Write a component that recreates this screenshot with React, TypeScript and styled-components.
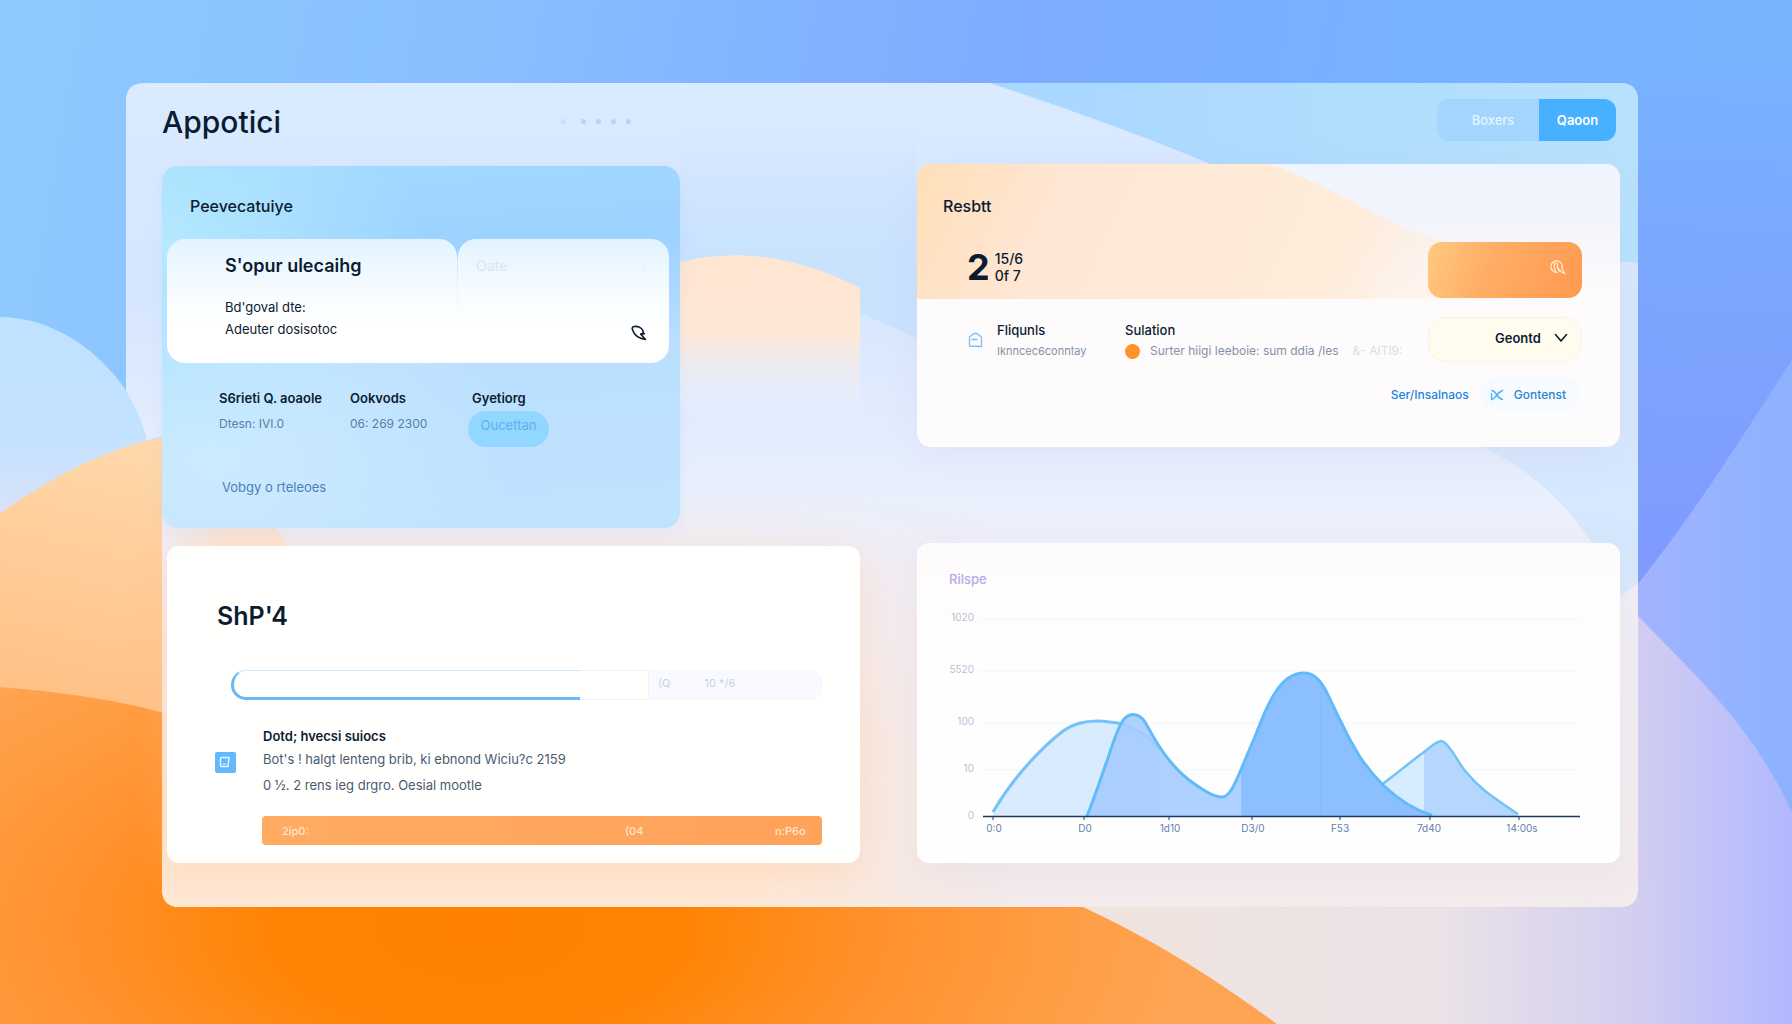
import React from "react";
import styled, { createGlobalStyle } from "styled-components";

const ink = "#0c1c30";

const GlobalStyle = createGlobalStyle`
  *, *::before, *::after { box-sizing: border-box; }
  body { margin: 0; background: #8cbcff; color: ${ink}; font-family: Inter, "Liberation Sans", sans-serif; }
  h1, h2, h3, p, dl, dt, dd { margin: 0; }
  button, select { font: inherit; color: inherit; border: 0; background: none; padding: 0; cursor: pointer; }
  a { text-decoration: none; }
`;

const Page = styled.div`
  position: relative;
  min-height: 100vh;
  padding: 83px 154px 117px 126px;
  overflow: hidden;
`;

const Art = styled.svg`
  position: absolute;
  inset: 0;
  width: 100%;
  height: 100%;
  display: block;
`;

const Panel = styled.div`
  position: relative;
  padding: 0 18px 44px 36px;
`;

const Header = styled.header`
  position: relative;
  display: flex;
  align-items: center;
  justify-content: space-between;
  height: 81px;
  padding: 0 4px 8px 0;
`;

const Brand = styled.div`
  display: flex;
  align-items: center;
  gap: 280px;
  padding-top: 4px;
`;

const Logo = styled.h1`
  font-size: 30px;
  line-height: 36px;
  font-weight: 500;
`;

const Dots = styled.div`
  display: flex;
  gap: 10px;
`;

const Dot = styled.i<{ $faint?: boolean }>`
  width: 5px;
  height: 5px;
  border-radius: 50%;
  background: #bfd0ea;
  opacity: ${(p) => (p.$faint ? 0.5 : 1)};
  margin-right: ${(p) => (p.$faint ? "5px" : 0)};
`;

const Segmented = styled.div`
  display: flex;
  height: 42px;
  border-radius: 12px;
  overflow: hidden;
  background: #a3d5ff;
`;

const Segment = styled.button<{ $active?: boolean }>`
  width: ${(p) => (p.$active ? "77px" : "102px")};
  padding-left: ${(p) => (p.$active ? 0 : "10px")};
  font-size: 13px;
  font-weight: ${(p) => (p.$active ? 600 : 500)};
  color: ${(p) => (p.$active ? "#ffffff" : "#e6f4ff")};
  background: ${(p) => (p.$active ? "#47b1ff" : "transparent")};
`;

const Board = styled.main`
  position: relative;
  display: grid;
  grid-template-columns: 698fr 703fr;
  gap: 57px;
`;

const Column = styled.div<{ $gap: number; $top?: number }>`
  display: flex;
  flex-direction: column;
  min-width: 0;
  gap: ${(p) => p.$gap}px;
  padding-top: ${(p) => p.$top ?? 0}px;
`;

const SkyCard = styled.section`
  width: calc(100% - 180px);
  min-height: 362px;
  padding: 0 11px 0 5px;
  border-radius: 16px;
  background:
    radial-gradient(ellipse 260px 220px at 0% 22%, #b4e9ff 0%, rgba(180, 233, 255, 0) 100%),
    radial-gradient(ellipse 300px 200px at 10% 80%, #ccebff 0%, rgba(204, 235, 255, 0) 100%),
    linear-gradient(176deg, #a3d8ff 0%, #9dd2ff 26%, #bbdfff 54%, #c0e3ff 100%);
  box-shadow: 0 4px 16px rgba(150, 190, 240, 0.14);
`;

const SkyTitle = styled.h2`
  padding: 29px 0 0 23px;
  height: 73px;
  font-size: 16px;
  line-height: 22px;
  font-weight: 500;
`;

const Tabs = styled.div`
  display: grid;
  grid-template-columns: 290fr 1px 211fr;
  height: 124px;
`;

const TabPane = styled.div<{ $side: "left" | "right" }>`
  display: flex;
  flex-direction: column;
  min-width: 0;
  padding: ${(p) => (p.$side === "left" ? "16px 16px 0 58px" : "16px 22px 22px 18px")};
  border-radius: ${(p) => (p.$side === "left" ? "18px 18px 0 18px" : "18px 18px 18px 0")};
  background: linear-gradient(#e2f4ff 0%, #fafdff 52%, #ffffff 70%);
`;

const Seam = styled.div`
  margin-top: 18px;
  background: linear-gradient(#cbe7fb, #ffffff 56%);
`;

const TabTitle = styled.h3`
  font-size: 18px;
  line-height: 22px;
  font-weight: 600;
  margin-bottom: 19px;
`;

const Line = styled.p`
  font-size: 13px;
  line-height: 22px;
`;

const Ghost = styled.div`
  display: flex;
  justify-content: space-between;
  flex: 1;
  font-size: 14px;
  line-height: 22px;
  color: #d6e7f3;
`;

const IconButton = styled.button`
  align-self: flex-end;
  display: block;
  height: 16px;
`;

const Facts = styled.dl`
  display: grid;
  grid-template-columns: 131px 122px 1fr;
  padding: 25px 0 0 52px;
  font-size: 12px;
  line-height: 20px;
`;

const Term = styled.dt`
  font-size: 13px;
  font-weight: 600;
  white-space: nowrap;
`;

const Detail = styled.dd`
  margin-top: 6px;
  color: #5580a8;
`;

const Badge = styled.span`
  display: block;
  width: 81px;
  height: 36px;
  margin: -3px 0 0 -4px;
  padding-top: 4px;
  border-radius: 18px;
  text-align: center;
  font-size: 13px;
  color: #5db2ef;
  background: #92d7ff;
`;

const SkyLink = styled.a`
  display: inline-block;
  margin: 30px 0 0 55px;
  font-size: 13px;
  line-height: 20px;
  color: #4c80b4;
`;

const UsageCard = styled.section`
  min-height: 317px;
  margin-left: 5px;
  padding: 54px 38px 18px 50px;
  border-radius: 12px;
  background: #fffffe;
  box-shadow: 0 12px 36px rgba(255, 190, 140, 0.3);
`;

const Figure = styled.h2`
  font-size: 25px;
  line-height: 32px;
  font-weight: 600;
`;

const Track = styled.div`
  display: flex;
  justify-content: space-between;
  height: 30px;
  margin: 38px 0 0 14px;
  border-radius: 14px;
  box-shadow: inset 0 0 0 1px #f0f2fa;
`;

const Fill = styled.div`
  border: 0 solid #68b8f7;
  border-width: 1px 0 3px 3px;
  border-top-color: #d3eafc;
  border-radius: 15px 0 0 15px;
`;

const TrackEnd = styled.div`
  display: flex;
  align-items: center;
  gap: 34px;
  width: 174px;
  padding: 0 0 4px 9px;
  border-left: 1px solid #eef2f9;
  border-radius: 0 14px 14px 0;
  font-size: 11px;
  color: #c3d4ea;
  background: rgba(246, 248, 255, 0.7);
`;

const Notice = styled.div`
  display: grid;
  grid-template-columns: 20px 1fr;
  column-gap: 28px;
  align-items: center;
  margin: 26px 0 0 -2px;
`;

const NoticeText = styled.div`
  display: flex;
  flex-direction: column;
  font-size: 13px;
  line-height: 26px;
  color: #4a5a70;
  white-space: nowrap;
`;

const NoticeTitle = styled.h3`
  font-size: 13px;
  line-height: 20px;
  font-weight: 600;
  color: ${ink};
`;

const Bar = styled.div`
  display: grid;
  grid-template-columns: 343px 150px 1fr;
  align-items: center;
  height: 29px;
  margin: 18px 0 0 45px;
  padding-left: 20px;
  border-radius: 4px;
  font-size: 11px;
  font-weight: 500;
  color: #ffe6cf;
  background: linear-gradient(90deg, #ffab62, #ffa25a);
`;

const ResultCard = styled.section`
  position: relative;
  min-height: 283px;
  border-radius: 14px;
  overflow: hidden;
  background: #fefbfc;
  box-shadow: 0 10px 34px rgba(190, 180, 220, 0.16);
`;

const Hero = styled.div`
  position: relative;
  height: 135px;
  padding: 31px 38px 0 26px;
`;

const HeroTitle = styled.h2`
  position: relative;
  font-size: 16px;
  line-height: 22px;
  font-weight: 500;
`;

const HeroRow = styled.div`
  position: relative;
  display: flex;
  align-items: center;
  justify-content: space-between;
  margin-top: 25px;
  padding-left: 24px;
`;

const Score = styled.div`
  display: flex;
  align-items: center;
  gap: 5px;
  padding-bottom: 6px;
`;

const ScoreMain = styled.strong`
  font-size: 36px;
  line-height: 36px;
  font-weight: 700;
`;

const ScoreSide = styled.span`
  display: flex;
  flex-direction: column;
  font-size: 14px;
  line-height: 17px;
  font-weight: 500;
`;

const SearchButton = styled.button`
  display: flex;
  align-items: center;
  justify-content: flex-end;
  width: 154px;
  height: 56px;
  padding: 0 16px 6px 0;
  border-radius: 14px;
  background: linear-gradient(110deg, #ffc980 0%, #ffad66 40%, #ff9a50 100%);
`;

const ResultRow = styled.div`
  display: grid;
  grid-template-columns: 29px 128px 1fr 154px;
  align-items: start;
  padding: 18px 38px 0 51px;
`;

const RowIcon = styled.div`
  padding-top: 15px;
  height: 34px;
`;

const Field = styled.div`
  padding-top: 3px;
  min-width: 0;
  white-space: nowrap;
`;

const FieldTitle = styled.h3`
  font-size: 13px;
  line-height: 20px;
  font-weight: 500;
`;

const FieldText = styled.p<{ $small?: boolean }>`
  display: flex;
  align-items: center;
  font-size: ${(p) => (p.$small ? 11 : 12)}px;
  line-height: 22px;
  color: #8791a6;
`;

const Bullet = styled.i`
  width: 15px;
  height: 15px;
  margin-right: 10px;
  border-radius: 50%;
  background: #ff9327;
`;

const Faint = styled.span`
  margin-left: 14px;
  color: #dcdee6;
`;

const SelectWrap = styled.div`
  position: relative;
`;

const Select = styled.select`
  appearance: none;
  width: 100%;
  height: 45px;
  padding: 0 30px 4px 66px;
  border: 1px solid #f8f3e4;
  border-radius: 18px;
  font-size: 13px;
  font-weight: 600;
  background: #fffcef;
`;

const Chevron = styled.svg`
  position: absolute;
  right: 14px;
  top: 16px;
  pointer-events: none;
`;

const Actions = styled.div`
  display: flex;
  align-items: center;
  justify-content: flex-end;
  gap: 12px;
  padding: 16px 40px 0 0;
  font-size: 12px;
  font-weight: 500;
`;

const ActionLink = styled.a`
  color: #2486dc;
`;

const ActionButton = styled.button`
  display: flex;
  align-items: center;
  gap: 10px;
  height: 33px;
  padding: 0 14px 0 9px;
  border-radius: 14px;
  color: #2f83cb;
  background: #f7fbff;
`;

const ChartCard = styled.section`
  min-height: 320px;
  padding: 26px 32px 20px;
  border-radius: 12px;
  background: linear-gradient(#fefbfd, #fefefe 30%);
  box-shadow: 0 10px 34px rgba(225, 205, 215, 0.25);
`;

const ChartTitle = styled.h2`
  margin-bottom: 11px;
  font-size: 13px;
  line-height: 20px;
  font-weight: 500;
  color: #b7a9ea;
`;

const Chart = styled.svg`
  display: block;
  width: 100%;
  height: auto;
  font-size: 10px;
`;

const waveA = "M44 212C66 174 96 145 114 131C128 121 146 120 161 122C184 124 198 136 211 148";
const waveB =
  "M138 216C146 196 152 178 159 158C165 140 168 130 173 122C179 112 189 112 196 122C204 136 210 148 220 160C232 175 242 182 253 189C262 195 267 197 273 197C280 197 285 186 291 172C297 158 300 150 305 139C313 120 316 108 326 93C334 80 344 73 355 73C365 73 371 80 376 89C382 101 386 110 392 122C398 135 404 146 411 157C419 169 427 178 435 186C449 199 466 210 482 215";
const waveC = "M432 185C446 175 460 163 475 152C482 147 486 142 492 141C497 142 498 145 502 150C508 158 511 165 517 172C523 179 529 185 536 191C548 200 558 207 569 214";

const yLabels = [
  { text: "1020", y: 18 },
  { text: "5520", y: 70 },
  { text: "100", y: 122 },
  { text: "10", y: 169 },
  { text: "0", y: 216 },
];
const xLabels = [
  { text: "0:0", x: 45 },
  { text: "D0", x: 136 },
  { text: "1d10", x: 221 },
  { text: "D3/0", x: 304 },
  { text: "F53", x: 391 },
  { text: "7d40", x: 480 },
  { text: "14:00s", x: 573 },
];

function Backdrop() {
  return (
    <Art viewBox="0 0 1792 1024" preserveAspectRatio="none" aria-hidden="true">
      <defs>
        <linearGradient id="sky" x1="0" y1="0" x2="1" y2="0.1">
          <stop offset="0" stopColor="#8fcaff" />
          <stop offset="0.3" stopColor="#88bdff" />
          <stop offset="0.57" stopColor="#7eabff" />
          <stop offset="0.8" stopColor="#77b3ff" />
          <stop offset="1" stopColor="#79b4ff" />
        </linearGradient>
        <linearGradient id="indigo" x1="0" y1="0" x2="0" y2="1">
          <stop offset="0" stopColor="#7c9eff" stopOpacity="0" />
          <stop offset="0.35" stopColor="#7da2ff" stopOpacity="0.8" />
          <stop offset="0.75" stopColor="#7f9aff" />
        </linearGradient>
        <linearGradient id="bubble" x1="0" y1="0" x2="0" y2="1">
          <stop offset="0" stopColor="#bfe2ff" />
          <stop offset="0.4" stopColor="#c4e2ff" />
          <stop offset="0.65" stopColor="#d9e2fa" />
        </linearGradient>
        <linearGradient id="hillLight" x1="0.4" y1="0" x2="0.2" y2="1">
          <stop offset="0" stopColor="#ffd9ad" />
          <stop offset="1" stopColor="#ffb06a" />
        </linearGradient>
        <radialGradient id="hillDark" gradientUnits="userSpaceOnUse" cx="0" cy="0" r="1" gradientTransform="translate(480 930) scale(700 340)">
          <stop offset="0" stopColor="#ff8000" />
          <stop offset="0.3" stopColor="#ff8406" />
          <stop offset="0.6" stopColor="#ff9330" />
          <stop offset="1" stopColor="#ffa452" />
        </radialGradient>
        <linearGradient id="mist" gradientUnits="userSpaceOnUse" x1="1080" y1="0" x2="1792" y2="0">
          <stop offset="0" stopColor="#f0e4dd" />
          <stop offset="0.5" stopColor="#ebe3e7" />
          <stop offset="0.78" stopColor="#d3cef0" />
          <stop offset="1" stopColor="#b0b8ff" />
        </linearGradient>
        <linearGradient id="wing" x1="0" y1="0" x2="1" y2="0">
          <stop offset="0" stopColor="#a3b3ff" />
          <stop offset="0.8" stopColor="#8fb3ff" />
          <stop offset="1" stopColor="#8db0ff" />
        </linearGradient>
      </defs>
      <rect width="1792" height="1024" fill="url(#sky)" />
      <rect x="1500" y="60" width="292" height="680" fill="url(#indigo)" />
      <path d="M0 317C76 318 134 382 156 450V620H0Z" fill="url(#bubble)" />
      <path d="M1792 360C1740 440 1700 505 1638 584V1024H1792Z" fill="url(#wing)" />
      <path d="M1638 616C1710 690 1752 728 1792 812V1024H1000V616Z" fill="url(#mist)" />
      <path d="M0 513C60 472 110 448 162 437H400V900H0Z" fill="url(#hillLight)" />
      <path d="M0 687C60 692 120 700 163 713L1083 907C1150 938 1210 975 1277 1024H0Z" fill="url(#hillDark)" />
    </Art>
  );
}

function PanelArt() {
  return (
    <Art viewBox="0 0 1512 824" preserveAspectRatio="none" aria-hidden="true">
      <defs>
        <linearGradient id="glass" x1="0" y1="0" x2="0" y2="1">
          <stop offset="0" stopColor="#daeaff" />
          <stop offset="0.25" stopColor="#d6e6ff" />
          <stop offset="0.5" stopColor="#e9f0fd" />
          <stop offset="0.58" stopColor="#f0effa" />
          <stop offset="1" stopColor="#f3ebec" />
        </linearGradient>
        <linearGradient id="warm" x1="0" y1="0" x2="0" y2="1">
          <stop offset="0" stopColor="#ffe4d2" stopOpacity="0" />
          <stop offset="0.6" stopColor="#ffe4cf" stopOpacity="0.9" />
          <stop offset="1" stopColor="#ffe8d6" />
        </linearGradient>
        <linearGradient id="warmFade" x1="0" y1="0" x2="1" y2="0">
          <stop offset="0.7" stopColor="#fff" />
          <stop offset="1" stopColor="#000" />
        </linearGradient>
        <mask id="warmMask">
          <rect y="400" width="880" height="424" fill="url(#warmFade)" />
        </mask>
        <linearGradient id="swoosh" x1="0" y1="0" x2="1" y2="0">
          <stop offset="0" stopColor="#a9d6ff" />
          <stop offset="1" stopColor="#b7e2fd" />
        </linearGradient>
        <linearGradient id="channel" x1="0" y1="0" x2="0" y2="1">
          <stop offset="0" stopColor="#cce3ff" stopOpacity="0" />
          <stop offset="0.6" stopColor="#c9e3ff" />
        </linearGradient>
        <linearGradient id="peach" x1="0" y1="0" x2="0" y2="1">
          <stop offset="0" stopColor="#ffe5d2" />
          <stop offset="0.45" stopColor="#ffe8d6" />
          <stop offset="1" stopColor="#eef4ff" stopOpacity="0" />
        </linearGradient>
        <linearGradient id="patch" x1="0" y1="0" x2="1" y2="0">
          <stop offset="0" stopColor="#ffe0c9" stopOpacity="0" />
          <stop offset="0.5" stopColor="#ffe0c9" />
        </linearGradient>
        <clipPath id="frame">
          <path d="M0 18Q0 0 18 0H1494Q1512 0 1512 18V806Q1512 824 1494 824H54Q36 824 36 806V354L21 357Q14 330 0 308Z" />
        </clipPath>
      </defs>
      <g clipPath="url(#frame)">
        <rect width="1512" height="824" fill="url(#glass)" />
        <path d="M554 40H791V255L734 230L554 190Z" fill="url(#channel)" />
        <path d="M864 0C960 32 1060 68 1142 106C1250 150 1400 170 1512 180V0Z" fill="url(#swoosh)" />
        <path d="M1300 345C1390 365 1440 420 1466 460L1494 514L1512 500V180L1300 180Z" fill="#d6e8fd" />
        <path d="M554 179C610 165 670 172 734 205V340H554Z" fill="url(#peach)" />
        <rect y="400" width="880" height="424" fill="url(#warm)" mask="url(#warmMask)" />
        <path d="M36 445H150Q160 455 164 470H36Z" fill="url(#patch)" opacity="0.7" />
      </g>
    </Art>
  );
}

export default function App() {
  const progress = 59;
  return (
    <Page>
      <GlobalStyle />
      <Backdrop />
      <Panel>
        <PanelArt />
        <Header>
          <Brand>
            <Logo>Appotici</Logo>
            <Dots aria-hidden="true">
              <Dot $faint />
              <Dot />
              <Dot />
              <Dot />
              <Dot />
            </Dots>
          </Brand>
          <Segmented>
            <Segment type="button">Boxers</Segment>
            <Segment type="button" $active>Qaoon</Segment>
          </Segmented>
        </Header>
        <Board>
          <Column $gap={18} $top={2}>
            <SkyCard>
              <SkyTitle>Peevecatuiye</SkyTitle>
              <Tabs>
                <TabPane $side="left">
                  <TabTitle>S'opur ulecaihg</TabTitle>
                  <Line>Bd'goval dte:</Line>
                  <Line>Adeuter dosisotoc</Line>
                </TabPane>
                <Seam />
                <TabPane $side="right">
                  <Ghost>
                    <span>Oate</span>
                    <span>.</span>
                  </Ghost>
                  <IconButton type="button" aria-label="Search">
                    <svg width="16" height="16" viewBox="0 0 16 16" fill="none" stroke={ink} strokeWidth="1.6" strokeLinejoin="round" strokeLinecap="round">
                      <path d="M2 1.8C6 .6 10.500 2 12 5.800C12.600 7.800 11.200 9 9.800 9.200L14.500 14.500C8.500 13.600 3.200 10.300 1.500 4.800Q.800 2.600 2 1.800Z" />
                      <path d="M9.800 9.200L13.400 8.600" />
                    </svg>
                  </IconButton>
                </TabPane>
              </Tabs>
              <Facts>
                <div>
                  <Term>S6rieti Q. aoaole</Term>
                  <Detail>Dtesn: IVI.0</Detail>
                </div>
                <div>
                  <Term>Ookvods</Term>
                  <Detail>06: 269 2300</Detail>
                </div>
                <div>
                  <Term>Gyetiorg</Term>
                  <Detail>
                    <Badge>Oucettan</Badge>
                  </Detail>
                </div>
              </Facts>
              <SkyLink href="#releases">Vobgy o rteleoes</SkyLink>
            </SkyCard>
            <UsageCard>
              <Figure>ShP'4</Figure>
              <Track role="progressbar" aria-valuenow={progress} aria-label="Usage">
                <Fill style={{ width: `${progress}%` }} />
                <TrackEnd>
                  <span>(Q</span>
                  <span>10 */6</span>
                </TrackEnd>
              </Track>
              <Notice>
                <svg width="21" height="21" viewBox="0 0 21 21" aria-hidden="true">
                  <rect width="21" height="21" rx="2" fill="#62b9fb" />
                  <path d="M5.500 6.500Q5.500 5.500 6.500 5.500H14L13 14.500H6.500Q5.500 14.500 5.500 13.500Z" fill="none" stroke="#e6f6ff" strokeWidth="1.4" />
                  <path d="M7.500 12H11" stroke="#e6f6ff" strokeWidth="1" />
                </svg>
                <NoticeText>
                  <NoticeTitle>Dotd; hvecsi suiocs</NoticeTitle>
                  <p>Bot's ! halgt lenteng brib, ki ebnond Wiciu?c 2159</p>
                  <p>0 ½. 2 rens ieg drgro. Oesial mootle</p>
                </NoticeText>
              </Notice>
              <Bar>
                <span>2ip0:</span>
                <span>(04</span>
                <span>n:P6o</span>
              </Bar>
            </UsageCard>
          </Column>
          <Column $gap={96}>
            <ResultCard>
              <Hero>
                <Art viewBox="0 0 703 135" preserveAspectRatio="none" aria-hidden="true">
                  <defs>
                    <linearGradient id="heroBase" x1="0" y1="0" x2="0" y2="1">
                      <stop offset="0" stopColor="#eff5ff" />
                      <stop offset="0.4" stopColor="#f3f4fb" />
                      <stop offset="1" stopColor="#fefbfc" />
                    </linearGradient>
                    <linearGradient id="heroPeach" x1="0" y1="0" x2="1" y2="0.1">
                      <stop offset="0" stopColor="#ffdfb8" />
                      <stop offset="0.25" stopColor="#ffe7d6" />
                      <stop offset="0.7" stopColor="#ffecda" />
                      <stop offset="1" stopColor="#fff0ea" stopOpacity="0" />
                    </linearGradient>
                  </defs>
                  <rect width="703" height="135" fill="url(#heroBase)" />
                  <path d="M0 0H353C420 24 460 56 510 72C580 92 630 104 660 135H0Z" fill="url(#heroPeach)" />
                </Art>
                <HeroTitle>Resbtt</HeroTitle>
                <HeroRow>
                  <Score>
                    <ScoreMain>2</ScoreMain>
                    <ScoreSide>
                      <span>15/6</span>
                      <span>0f 7</span>
                    </ScoreSide>
                  </Score>
                  <SearchButton type="button" aria-label="Search results">
                    <svg width="17" height="17" viewBox="0 0 17 17" fill="none" stroke="#fff1e0" strokeWidth="1.2" strokeLinecap="round">
                      <path d="M8 13.500C4 13.500 1.800 10.500 2 7C2.300 3 6 1.200 9 2C12.500 3 13.800 6 13 9.500L15.500 14.500L9.500 11.500" />
                      <path d="M6.500 3C5 5.500 5 9.500 7 13M8.500 4V9L11 11.500" />
                    </svg>
                  </SearchButton>
                </HeroRow>
              </Hero>
              <ResultRow>
                <RowIcon>
                  <svg width="15" height="16" viewBox="0 0 15 16" fill="none" stroke="#76c2f3" strokeWidth="1.3" strokeLinejoin="round">
                    <path d="M1.500 5L6 1.500H9L13.500 5V14.500L1.500 14Z" />
                    <path d="M3.500 7.500H9.500" />
                  </svg>
                </RowIcon>
                <Field>
                  <FieldTitle>Fliqunls</FieldTitle>
                  <FieldText $small>Iknncec6conntay</FieldText>
                </Field>
                <Field>
                  <FieldTitle>Sulation</FieldTitle>
                  <FieldText>
                    <Bullet />
                    Surter hiigi leeboie: sum ddia /les
                    <Faint>&amp;- AITI9:</Faint>
                  </FieldText>
                </Field>
                <SelectWrap>
                  <Select aria-label="Result filter" defaultValue="g">
                    <option value="g">Geontd</option>
                  </Select>
                  <Chevron width="14" height="10" viewBox="0 0 14 10" fill="none" stroke={ink} strokeWidth="1.6" strokeLinecap="round" strokeLinejoin="round">
                    <path d="M1.500 1.500L7 8L12.500 1.500" />
                  </Chevron>
                </SelectWrap>
              </ResultRow>
              <Actions>
                <ActionLink href="#details">Ser/Insalnaos</ActionLink>
                <ActionButton type="button">
                  <svg width="14" height="12" viewBox="0 0 14 12" fill="none" stroke="#4fb3f4" strokeWidth="1.5" strokeLinecap="round">
                    <path d="M2 1.500Q4.500 2 7 6T12.500 10.500" />
                    <path d="M12.500 1.500Q9 3 6.500 6.500T1.500 10.500V5" />
                  </svg>
                  Gontenst
                </ActionButton>
              </Actions>
            </ResultCard>
            <ChartCard>
              <ChartTitle>Rilspe</ChartTitle>
              <Chart viewBox="0 0 639 240" role="img" aria-label="Rilspe chart">
                <defs>
                  <clipPath id="beforePeak"><rect width="292" height="240" /></clipPath>
                  <clipPath id="mainPeak"><rect x="292" width="300" height="240" /></clipPath>
                  <clipPath id="lastLeft"><rect width="475" height="240" /></clipPath>
                  <clipPath id="lastRight"><rect x="475" width="164" height="240" /></clipPath>
                </defs>
                {yLabels.slice(0, 4).map((l) => (
                  <path key={l.text} d={`M30 ${l.y + 1}H631`} stroke="#f4f5f8" />
                ))}
                {yLabels.map((l) => (
                  <text key={l.text} x="25" y={l.y + 3} textAnchor="end" fill="#b9c0d2">{l.text}</text>
                ))}
                <path d={`${waveC}V216H432Z`} fill="#d8ecff" clipPath="url(#lastLeft)" />
                <path d={`${waveC}V216H432Z`} fill="#b5d6ff" clipPath="url(#lastRight)" />
                <path d={waveC} fill="none" stroke="#74c3f7" strokeWidth="2.500" />
                <path d={`${waveA}V216H44Z`} fill="#d8ebff" />
                <path d={waveA} fill="none" stroke="#74c3f7" strokeWidth="3" />
                <path d={`${waveB}V216H138Z`} fill="#a5ccff" fillOpacity="0.9" clipPath="url(#beforePeak)" />
                <path d={`${waveB}V216H138Z`} fill="#8cbfff" clipPath="url(#mainPeak)" />
                <path d="M372 86V216" stroke="#86b9fb" />
                <path d={waveB} fill="none" stroke="#62bbf8" strokeWidth="3" strokeLinecap="round" />
                <path d="M34 216.500H631" stroke="#1f3a5c" strokeWidth="1.500" />
                {[44, 135, 220, 303, 391, 481, 570].map((x) => (
                  <path key={x} d={`M${x} 216V220`} stroke="#1f3a5c" />
                ))}
                {xLabels.map((l) => (
                  <text key={l.text} x={l.x} y="232" textAnchor="middle" fill="#5f80ab">{l.text}</text>
                ))}
              </Chart>
            </ChartCard>
          </Column>
        </Board>
      </Panel>
    </Page>
  );
}
